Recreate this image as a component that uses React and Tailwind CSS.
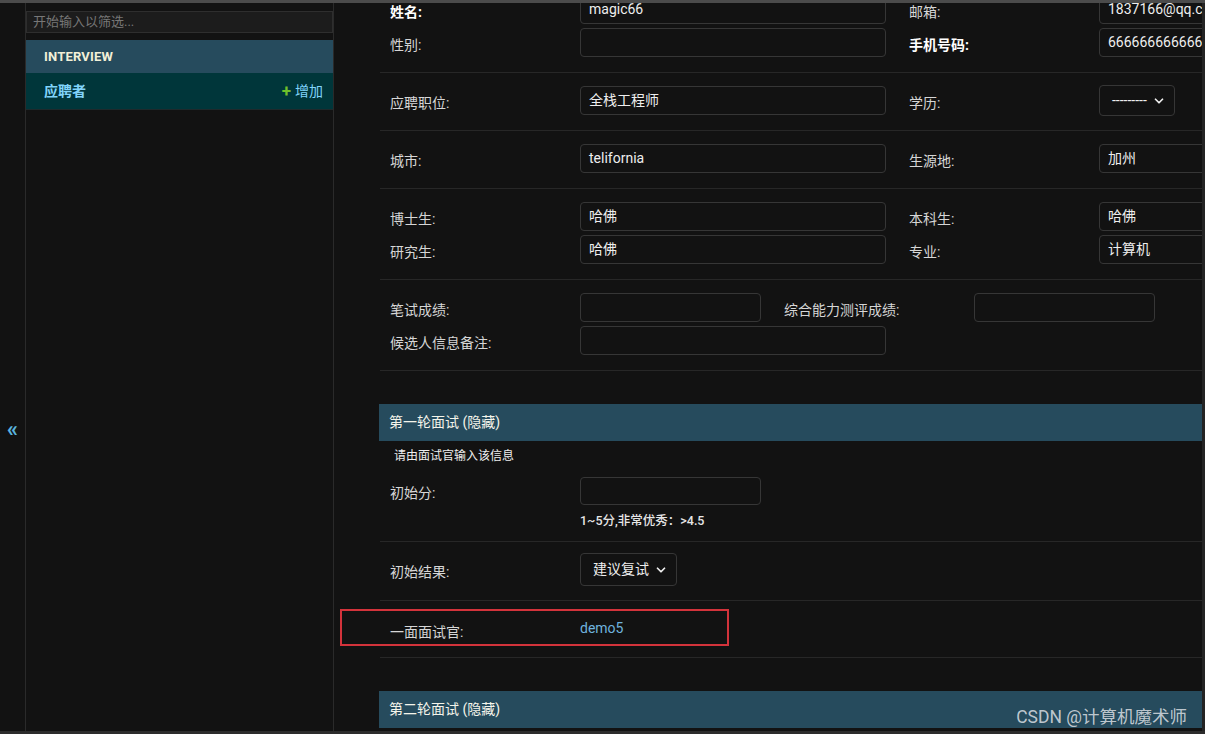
import { ChevronDown } from 'lucide-react';

const font = { fontFamily: 'Roboto, "Noto Sans CJK SC", sans-serif' };

const Label = ({ children, bold, width = 'w-[190px]' }) => (
  <div className={`${width} shrink-0 text-[14px] pt-[5px] ${bold ? 'font-bold text-white' : 'text-[#d6d6d6]'}`}>
    {children}
  </div>
);

const Input = ({ value, width = 'w-[306px]' }) => (
  <div className={`${width} shrink-0 h-[29px] border border-[#363636] rounded-[4px] px-[8px] flex items-center text-[14px] text-[#eeeeee]`}>
    {value}
  </div>
);

const Select = ({ value, width }) => (
  <div className={`${width} shrink-0 h-full border border-[#363636] rounded-[4px] pl-[12px] pr-[8px] flex items-center justify-between text-[14px] text-[#eeeeee]`}>
    <span>{value}</span>
    <ChevronDown size={14} strokeWidth={3} />
  </div>
);

const Line = ({ children, h = 'h-[29px]' }) => <div className={`flex items-center ${h}`}>{children}</div>;

const Row = ({ children, className = 'pt-[13px] pb-[15px]' }) => (
  <div className={`relative flex flex-col gap-[4px] pl-[10px] border-b border-[#272727] ${className}`}>{children}</div>
);

const SectionHeader = ({ children }) => (
  <div className="mt-[33px] -ml-[1px] h-[37px] bg-[#264b5d] pl-[10px] flex items-center text-[14px] text-[#f4f4ea]">
    {children}
  </div>
);

export default function App() {
  return (
    <div
      className="relative w-[1205px] h-[734px] overflow-hidden bg-[#121212] border-t-[3px] border-t-[#4b4b4b] border-b-[3px] border-b-[#2c2c2c] flex"
      style={font}
    >
      {/* toggle gutter */}
      <div className="w-[26px] shrink-0 border-r border-[#2a2a2a] flex justify-center pt-[416px]">
        <span className="text-[22px] leading-[20px] font-bold text-[#5ab4df]">«</span>
      </div>

      {/* sidebar */}
      <div className="w-[308px] shrink-0 border-r border-[#2a2a2a] flex flex-col">
        <div className="mt-[8px] h-[22px] bg-[#1c1c1c] border border-[#2e2e2e] flex items-center px-[6px] text-[13px] text-[#777777]">
          开始输入以筛选...
        </div>
        <div className="mt-[7px] h-[33px] bg-[#264b5d] pl-[18px] flex items-center text-[13px] font-bold text-[#f2f0d8] tracking-[0.2px]">
          INTERVIEW
        </div>
        <div className="h-[37px] bg-[#00363a] pl-[18px] pr-[10px] flex items-center justify-between border-b border-[#1e2a2c]">
          <span className="text-[14px] font-bold text-[#81d4fa]">应聘者</span>
          <span className="flex items-center gap-[4px] text-[14px] text-[#81d4fa]">
            <span className="text-[#70bf2b] font-bold text-[17px] leading-none">+</span>
            增加
          </span>
        </div>
      </div>

      {/* content */}
      <div className="flex-1 pl-[46px] overflow-hidden">
        <div className="-mt-[21px] flex flex-col">
          <Row>
            <Line>
              <Label bold>姓名:</Label>
              <Input value="magic66" />
              <div className="ml-[23px]" />
              <Label>邮箱:</Label>
              <Input value="1837166@qq.com" />
            </Line>
            <Line>
              <Label>性别:</Label>
              <Input value="" />
              <div className="ml-[23px]" />
              <Label bold>手机号码:</Label>
              <Input value="666666666666666" />
            </Line>
          </Row>
          <Row>
            <Line>
              <Label>应聘职位:</Label>
              <Input value="全栈工程师" />
              <div className="ml-[23px]" />
              <Label>学历:</Label>
              <div className="h-[31px] flex">
                <Select value="---------" width="w-[76px]" />
              </div>
            </Line>
          </Row>
          <Row>
            <Line>
              <Label>城市:</Label>
              <Input value="telifornia" />
              <div className="ml-[23px]" />
              <Label>生源地:</Label>
              <Input value="加州" />
            </Line>
          </Row>
          <Row>
            <Line>
              <Label>博士生:</Label>
              <Input value="哈佛" />
              <div className="ml-[23px]" />
              <Label>本科生:</Label>
              <Input value="哈佛" />
            </Line>
            <Line>
              <Label>研究生:</Label>
              <Input value="哈佛" />
              <div className="ml-[23px]" />
              <Label>专业:</Label>
              <Input value="计算机" />
            </Line>
          </Row>
          <Row>
            <Line>
              <Label>笔试成绩:</Label>
              <Input value="" width="w-[181px]" />
              <div className="ml-[23px]" />
              <Label>综合能力测评成绩:</Label>
              <Input value="" width="w-[181px]" />
            </Line>
            <Line>
              <Label>候选人信息备注:</Label>
              <Input value="" />
            </Line>
          </Row>

          <SectionHeader>第一轮面试 (隐藏)</SectionHeader>
          <div className="pl-[14px] pt-[7px] text-[12px] leading-[16px] text-[#eeeeee]">请由面试官输入该信息</div>
          <Row className="pt-[13px] pb-[12px]">
            <Line h="h-[28px]">
              <Label>初始分:</Label>
              <Input value="" width="w-[181px] !h-[28px]" />
            </Line>
            <div className="ml-[190px] mt-[4px] text-[12.5px] leading-[16px] font-medium text-[#e6e6e6]">1~5分,非常优秀：&gt;4.5</div>
          </Row>
          <Row className="pt-[11px] pb-[14px]">
            <Line h="h-[33px]">
              <Label>初始结果:</Label>
              <Select value="建议复试" width="w-[97px] !pl-[12px]" />
            </Line>
          </Row>
          <Row className="pt-[14px] pb-[13px]">
            <Line>
              <Label>一面面试官:</Label>
              <span className="text-[14px] text-[#6fb2de] -mt-[2px]">demo5</span>
            </Line>
            <div className="absolute -left-[40px] top-[8px] w-[389px] h-[37px] border-2 border-[#d3333b]" />
          </Row>

          <SectionHeader>第二轮面试 (隐藏)</SectionHeader>
        </div>
      </div>

      <div className="w-[3px] shrink-0 bg-[#242424]" />

      <div className="absolute right-[18px] bottom-[1px] text-[17.5px] text-[#d2d8de]/90">CSDN @计算机魔术师</div>
    </div>
  );
}
